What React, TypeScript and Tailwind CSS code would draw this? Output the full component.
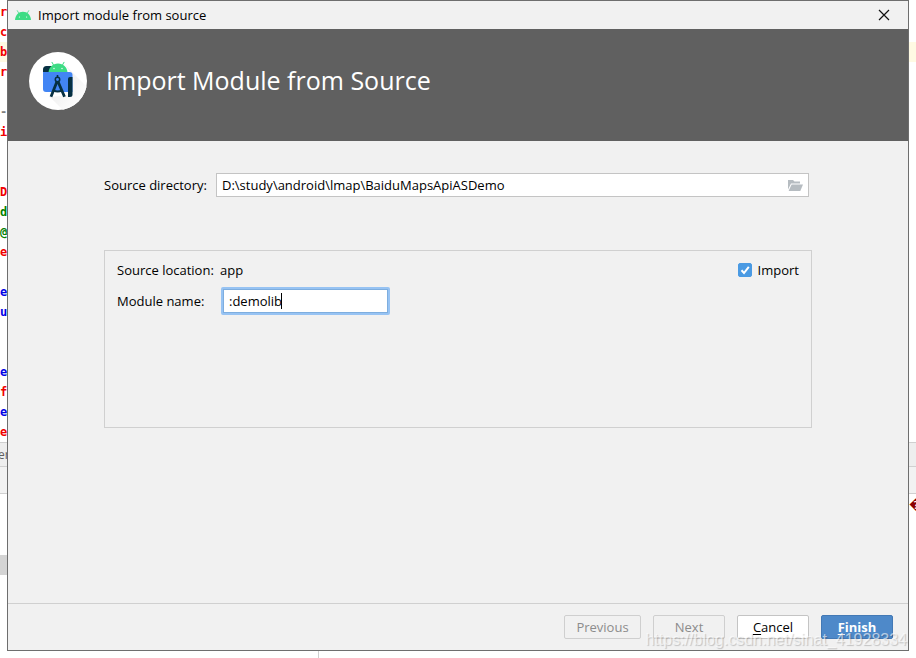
import { useState } from "react";

interface CodeLine {
  text: string;
  color?: string;
  active?: boolean;
}

const codeLines: CodeLine[] = [
  { text: "r", color: "text-[#f00000]" },
  { text: "c", color: "text-[#f00000]" },
  { text: "b", color: "text-[#f00000]", active: true },
  { text: "r", color: "text-[#f00000]" },
  { text: "" },
  { text: "-", color: "text-[#808080]" },
  { text: "i", color: "text-[#f00000]" },
  { text: "" },
  { text: "" },
  { text: "D", color: "text-[#f00000]" },
  { text: "d", color: "text-[#008000]" },
  { text: "@", color: "text-[#008000]" },
  { text: "e", color: "text-[#f00000]" },
  { text: "" },
  { text: "e", color: "text-[#0000e6]" },
  { text: "u", color: "text-[#0000e6]" },
  { text: "" },
  { text: "" },
  { text: "e", color: "text-[#0000e6]" },
  { text: "f", color: "text-[#f00000]" },
  { text: "e", color: "text-[#0000e6]" },
  { text: "e", color: "text-[#f00000]" },
];

function AndroidHead({ className }: { className?: string }) {
  return (
    <svg viewBox="0 0 16 10" className={className} aria-hidden="true">
      <path
        d="M3.9 3.4 2.3.7M12.1 3.4 13.7.7"
        stroke="#3ddc84"
        strokeWidth="0.8"
        strokeLinecap="round"
      />
      <path d="M0 10C.3 5.200 3.600 1.800 8 1.800S15.700 5.200 16 10Z" fill="#3ddc84" />
      <circle cx="4.400" cy="7" r="0.600" fill="#fff" />
      <circle cx="11.600" cy="7" r="0.600" fill="#fff" />
    </svg>
  );
}

function StudioLogo() {
  return (
    <svg viewBox="0 0 58 58" className="size-[58px] shrink-0" aria-hidden="true">
      <defs>
        <linearGradient id="shade" x1="0" y1="0" x2="1" y2="1">
          <stop offset="0.2" stopColor="#ececec" />
          <stop offset="0.8" stopColor="#ffffff" />
        </linearGradient>
        <clipPath id="disc">
          <circle cx="29" cy="29" r="29" />
        </clipPath>
      </defs>
      <circle cx="29" cy="29" r="29" fill="#fff" />
      <path d="M36 13 62 39V62H38L21 45 43 43V22Z" fill="url(#shade)" clipPath="url(#disc)" />
      <path d="M17.500 14H24V21H14V17.500Q14 14 17.500 14Z" fill="#073042" />
      <path d="M24.700 13.300 23 10.300M33.300 13.300 35 10.300" stroke="#3ddc84" strokeLinecap="round" />
      <path d="M19.500 20.500C20 15 23.700 11.500 29 11.500S38 15 38.500 20.500Z" fill="#3ddc84" />
      <circle cx="25" cy="16.500" r="0.700" fill="#fff" />
      <circle cx="33" cy="16.500" r="0.700" fill="#fff" />
      <path d="M14 20H40.500Q43.500 20 43.500 23V40H17Q14 40 14 37Z" fill="#4285f4" />
      <path d="M39 27Q39 25 41 25H43.500V42.500Q43.500 45 41 45H39Z" fill="#073042" />
      <path
        d="M27.800 30 22 44.700M29.200 30 35.500 44.700"
        stroke="#073042"
        strokeWidth="2.800"
        fill="none"
      />
      <path d="M24.500 38.300Q28.700 40.500 33 38.300" stroke="#073042" strokeWidth="2" fill="none" />
      <path d="M28.500 23V26" stroke="#073042" strokeWidth="1.600" />
      <circle cx="28.500" cy="27.500" r="2.200" fill="#4285f4" stroke="#073042" strokeWidth="1.500" />
    </svg>
  );
}

function EditorBackdrop() {
  return (
    <div className="absolute inset-0 flex flex-col overflow-hidden bg-white pt-[2px]" aria-hidden="true">
      {codeLines.map((line, index) => (
        <div
          key={index}
          className={`h-5 shrink-0 font-['DejaVu_Sans_Mono',monospace] text-xs leading-5 font-bold ${
            line.active ? "bg-[#fffae3]" : ""
          } ${line.color ?? ""}`}
        >
          {line.text}
        </div>
      ))}
      <div className="h-[25px] shrink-0 border-y border-[#d0d0d0] bg-[#eeeeee] -indent-[2px] text-xs leading-6 text-[#606060]">
        er
      </div>
      <div className="h-[27px] shrink-0 border-b border-[#d0d0d0] bg-[#f2f2f2]" />
      <div className="flex h-[61px] shrink-0 justify-end">
        <span className="w-[7px] text-sm leading-5 text-[#8b0000]">�</span>
      </div>
      <div className="h-5 w-10 shrink-0 bg-[#d4d4d4]" />
      <div className="w-[319px] grow border-r border-[#d0d0d0]" />
    </div>
  );
}

export default function App() {
  const [directory, setDirectory] = useState("D:\\study\\android\\lmap\\BaiduMapsApiASDemo");
  const [moduleName, setModuleName] = useState(":demolib");
  const [importModule, setImportModule] = useState(true);

  return (
    <div className="relative flex min-h-screen flex-col overflow-hidden px-[7px] pb-[7px] font-['Open_Sans',sans-serif] text-[13px] leading-5 text-black">
      <EditorBackdrop />
      <main className="relative flex grow flex-col border border-[#6e6e6e] bg-[#f1f1f1]">
        <div className="flex h-7 items-center pr-[18px] pl-[7px]">
          <AndroidHead className="h-[10px] w-4" />
          <span className="ml-[7px] grow">Import module from source</span>
          <button type="button" aria-label="Close">
            <svg viewBox="0 0 12 12" className="size-3" aria-hidden="true">
              <path d="M1 1 11 11M11 1 1 11" stroke="#111" strokeWidth="1.200" />
            </svg>
          </button>
        </div>

        <header className="flex h-28 items-start gap-[19px] bg-[#606060] px-[21px] pt-[23px] text-white">
          <StudioLogo />
          <h1 className="text-[25px] leading-[56px]">Import Module from Source</h1>
        </header>

        <div className="grow px-24 pt-8">
          <div className="flex items-center pr-[3px]">
            <label htmlFor="directory" className="w-28 shrink-0">
              Source directory:
            </label>
            <div className="flex h-6 grow items-center border border-[#c4c4c4] bg-white pr-[5px]">
              <input
                id="directory"
                type="text"
                value={directory}
                onChange={(e) => setDirectory(e.target.value)}
                className="h-full min-w-0 grow px-[5px] outline-none"
              />
              <button type="button" aria-label="Browse">
                <svg viewBox="0 0 16 12" className="h-3 w-4" aria-hidden="true">
                  <path d="M1 10.500V1H6L7.500 2.500H13V4.500H4Z" fill="#b6bcc1" />
                  <path d="M4.600 5.500H16L13.300 12H1.600Z" fill="#b6bcc1" />
                </svg>
              </button>
            </div>
          </div>

          <section className="mt-[53px] flex min-h-[178px] items-start justify-between border border-[#d0d0d0] px-3 pt-[9px]">
            <div>
              <div className="flex">
                <span className="w-[103px]">Source location:</span>
                <span>app</span>
              </div>
              <div className="mt-[7px] flex items-center">
                <label htmlFor="module" className="w-[104px]">
                  Module name:
                </label>
                <div className="relative">
                  <input
                    id="module"
                    type="text"
                    value={moduleName}
                    onChange={(e) => setModuleName(e.target.value)}
                    className="block h-7 w-[169px] rounded-xs border-2 border-[#97c3f3] bg-white px-[6px] caret-transparent inset-ring inset-ring-[#7eaedf] outline-none"
                  />
                  <span className="absolute top-[6px] left-[60px] h-4 w-px bg-black" />
                </div>
              </div>
            </div>
            <label className="flex items-center gap-[6px]">
              <input
                type="checkbox"
                checked={importModule}
                onChange={(e) => setImportModule(e.target.checked)}
                className="peer sr-only"
              />
              <span className="flex size-[14px] items-center justify-center rounded-xs border border-[#4a9ae3] bg-white peer-checked:bg-[#4a9ae3]">
                <svg viewBox="0 0 12 12" className="size-3" fill="none" aria-hidden="true">
                  <path d="M2.500 6.300 5 9 9.800 2.800" stroke="#fff" strokeWidth="2" />
                </svg>
              </span>
              Import
            </label>
          </section>
        </div>

        <footer className="flex justify-end gap-3 border-t border-[#d0d0d0] py-[11px] pr-[15px]">
          <button
            type="button"
            disabled
            className="h-6 w-[77px] rounded-xs border border-[#cfcfcf] text-[#8c8c8c]"
          >
            Previous
          </button>
          <button
            type="button"
            disabled
            className="h-6 w-[72px] rounded-xs border border-[#cfcfcf] text-[#8c8c8c]"
          >
            Next
          </button>
          <button type="button" className="h-6 w-[72px] rounded-xs border border-[#c4c4c4] bg-white">
            <span className="underline underline-offset-2">C</span>ancel
          </button>
          <button
            type="button"
            className="h-6 w-[72px] rounded-xs border border-[#4379b5] bg-[#4e89c9] font-bold text-white"
          >
            <span className="underline underline-offset-2">F</span>inish
          </button>
        </footer>
      </main>
      <span className="pointer-events-none absolute right-[9px] bottom-2 font-['Liberation_Sans',sans-serif] text-base leading-5 text-white/60 [text-shadow:1px_1px_1px_rgb(0_0_0/0.2)]">
        https://blog.csdn.net/sinat_41928334
      </span>
    </div>
  );
}
